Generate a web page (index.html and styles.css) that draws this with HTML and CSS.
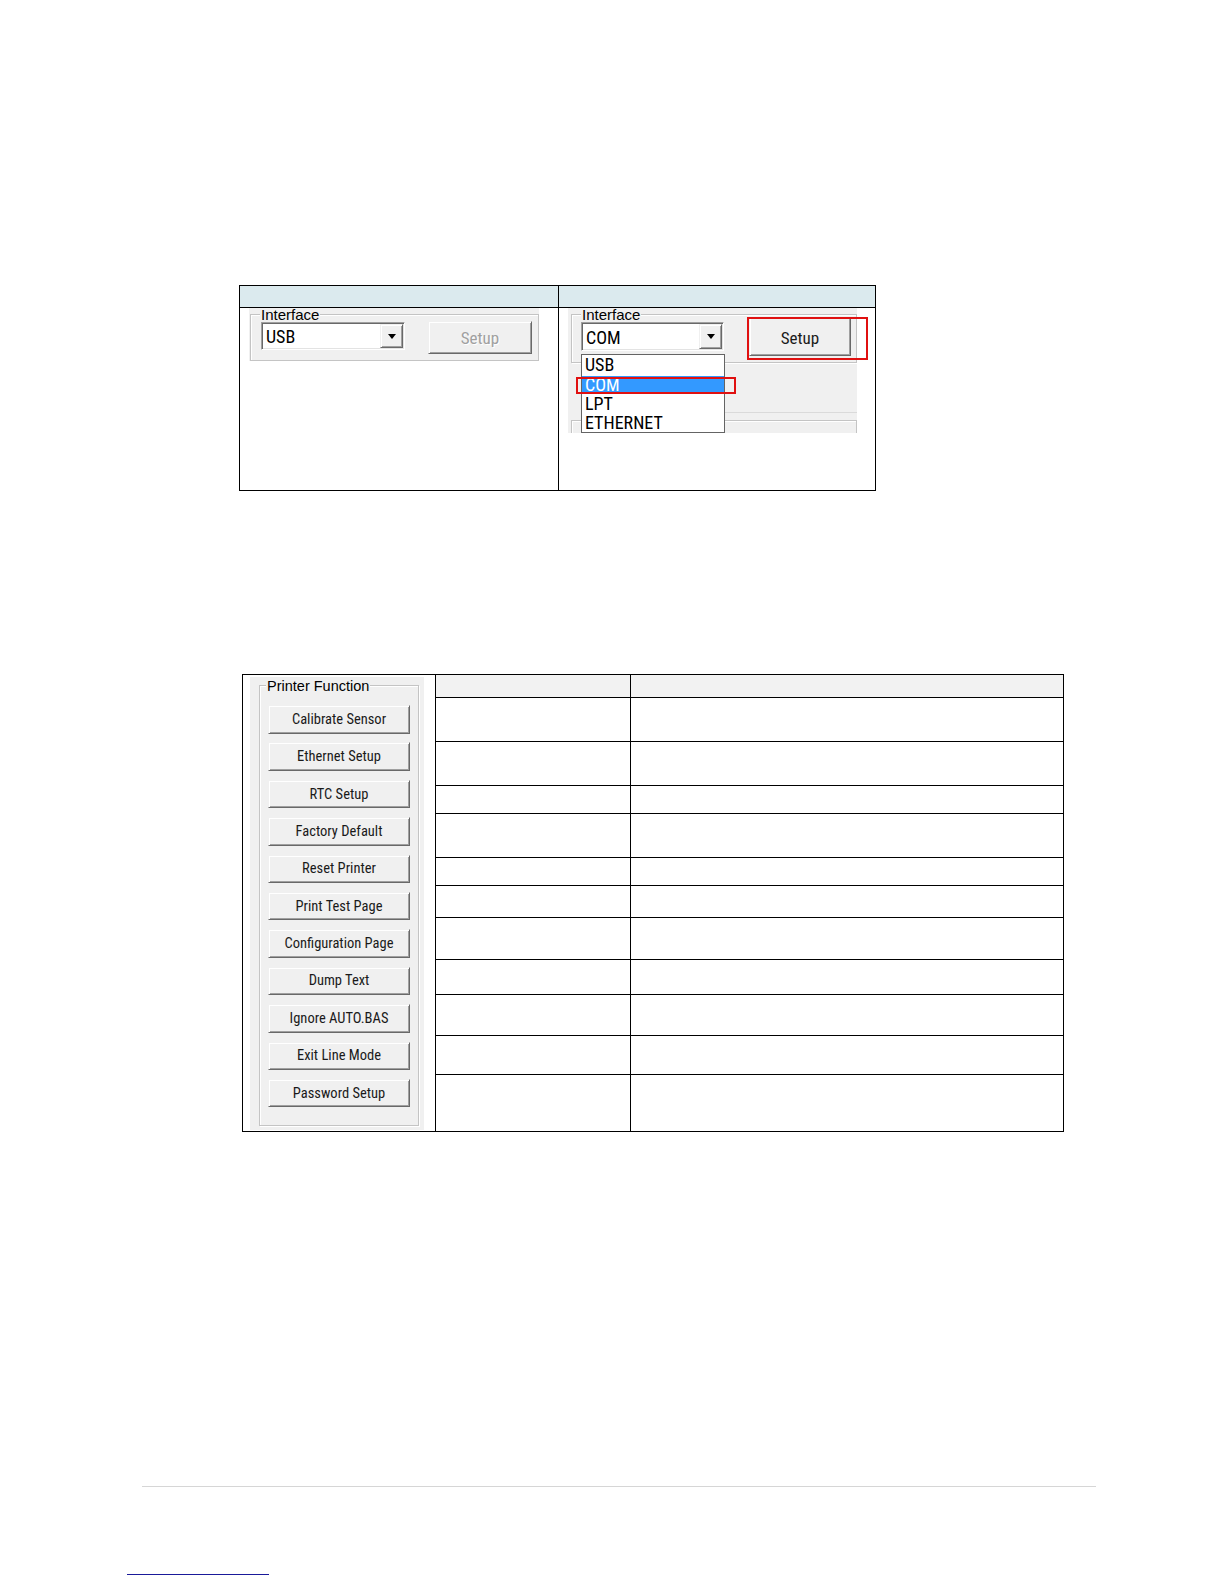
FILE: index.html
```html
<!DOCTYPE html>
<html>
<head>
<meta charset="utf-8">
<link rel="stylesheet" href="styles.css">
</head>
<body>
<div class="page">
  <div class="t1">
    <div class="cell hd"></div>
    <div class="cell hd"></div>
    <div class="cell">
      <div class="shot shot-a">
        <div class="grp grp-a">
          <span class="grp-label">Interface</span>
          <div class="grp-row">
            <div class="combo combo-a"><span class="combo-text">USB</span><span class="drop"><i class="tri"></i></span></div>
            <div class="btn btn-setup-a disabled">Setup</div>
          </div>
        </div>
      </div>
    </div>
    <div class="cell">
      <div class="shot shot-b">
        <div class="grp grp-b">
          <span class="grp-label">Interface</span>
          <div class="grp-row grp-row-b">
            <div class="combo combo-b"><span class="combo-text">COM</span><span class="drop"><i class="tri"></i></span></div>
            <div class="btn btn-setup-b">Setup</div>
          </div>
        </div>
        <div class="sep"></div>
        <div class="grp grp-b2"></div>
        <ul class="list">
          <li>USB</li>
          <li class="sel">COM</li>
          <li>LPT</li>
          <li>ETHERNET</li>
        </ul>
      </div>
      <div class="mark mark-com"></div>
      <div class="mark mark-setup"></div>
    </div>
  </div>

  <div class="t2">
    <div class="cell c-img">
      <div class="shot shot-pf">
        <div class="grp grp-pf">
          <span class="grp-label pf-label">Printer Function</span>
          <div class="pf-buttons">
            <div class="btn pf-btn">Calibrate Sensor</div>
            <div class="btn pf-btn">Ethernet Setup</div>
            <div class="btn pf-btn">RTC Setup</div>
            <div class="btn pf-btn">Factory Default</div>
            <div class="btn pf-btn">Reset Printer</div>
            <div class="btn pf-btn">Print Test Page</div>
            <div class="btn pf-btn">Configuration Page</div>
            <div class="btn pf-btn">Dump Text</div>
            <div class="btn pf-btn">Ignore AUTO.BAS</div>
            <div class="btn pf-btn">Exit Line Mode</div>
            <div class="btn pf-btn">Password Setup</div>
          </div>
        </div>
      </div>
    </div>
    <div class="cell hd2"></div><div class="cell hd2"></div>
    <div class="cell"></div><div class="cell"></div>
    <div class="cell"></div><div class="cell"></div>
    <div class="cell"></div><div class="cell"></div>
    <div class="cell"></div><div class="cell"></div>
    <div class="cell"></div><div class="cell"></div>
    <div class="cell"></div><div class="cell"></div>
    <div class="cell"></div><div class="cell"></div>
    <div class="cell"></div><div class="cell"></div>
    <div class="cell"></div><div class="cell"></div>
    <div class="cell"></div><div class="cell"></div>
    <div class="cell"></div><div class="cell"></div>
  </div>

  <div class="foot-rule"></div>
  <div class="note-rule"></div>
</div>
</body>
</html>
```

FILE: styles.css
```css
* { box-sizing: border-box; }
html, body { margin: 0; padding: 0; background: #fff; }
body {
  width: 1224px;
  height: 1584px;
  overflow: hidden;
  font-family: "Liberation Sans", Arial, sans-serif;
  color: #000;
}
.page { padding-top: 285px; display: flow-root; }

/* ---------- table 1 ---------- */
.t1 {
  margin-left: 239px;
  width: 637px;
  display: grid;
  grid-template-columns: 318px 316px;
  grid-template-rows: 21px 182px;
  gap: 1px;
  padding: 1px;
  background: #000;
}
.cell { background: #fff; position: relative; display: flow-root; }
.t1 .hd { background: #dbeaee; }

.shot { background: #f0f0f0; position: relative; display: flow-root; }
.shot-a { margin-left: 9px; width: 290px; height: 53px; }
.shot-b { margin-left: 9px; width: 289px; height: 125px; }

/* group boxes */
.grp {
  position: relative;
  border: 1px solid #c4c4c4;
  box-shadow: inset 1px 1px 0 #fff, 1px 1px 0 #fff;
}
.grp-label {
  position: absolute;
  top: -7px;
  left: 9px;
  padding: 0 1px;
  background: #f0f0f0;
  font-size: 15px;
  line-height: 14px;
  white-space: nowrap;
}
.grp-a { margin-left: 1px; margin-top: 6px; width: 289px; height: 47px; }
.grp-b { margin-left: 3px; margin-top: 6px; width: 286px; height: 49px; }
.sep { margin-left: 157px; margin-top: 49px; width: 132px; height: 1px; background: #dadada; }
.grp-b2 {
  margin-left: 3px; margin-top: 7px; width: 286px; height: 13px;
  border-bottom: none;
  box-shadow: inset 1px 1px 0 #fff;
}

.grp-row { display: flex; align-items: flex-start; padding: 7px 0 0 10px; }
.grp-row-b { padding-left: 9px; }

/* combo */
.combo {
  display: flex;
  align-items: stretch;
  background: #fff;
  border: 1px solid;
  border-color: #a0a0a0 #fff #fff #a0a0a0;
  box-shadow: inset 1px 1px 0 #696969, inset -1px -1px 0 #e3e3e3;
  padding: 1px;
  font-family: "Liberation Sans Narrow", "Roboto Condensed", "Liberation Sans", sans-serif;
  font-size: 18px;
}
.combo-a { width: 144px; height: 28px; }
.combo-b { width: 143px; height: 29px; }
.combo-text { flex: 1; display: flex; align-items: center; padding-left: 3px; padding-top: 1px; }
.drop {
  width: 23px;
  display: flex;
  align-items: center;
  justify-content: center;
  background: #f0f0f0;
  border: 1px solid;
  border-color: #f0f0f0 #696969 #696969 #f0f0f0;
  box-shadow: inset 1px 1px 0 #fff, inset -1px -1px 0 #a0a0a0;
}
.tri {
  display: block;
  width: 0; height: 0;
  border-left: 4px solid transparent;
  border-right: 4px solid transparent;
  border-top: 5px solid #000;
}

/* buttons */
.btn {
  display: flex;
  align-items: center;
  justify-content: center;
  background: #f0f0f0;
  border: 1px solid;
  border-color: #f0f0f0 #696969 #696969 #f0f0f0;
  box-shadow: inset 1px 1px 0 #fff, inset -1px -1px 0 #a0a0a0;
  font-family: "Liberation Sans Narrow", "Roboto Condensed", "Liberation Sans", sans-serif;
  color: #1a1a1a;
  white-space: nowrap;
}
.btn-setup-a { margin-left: 23px; margin-top: -1px; width: 104px; height: 33px; font-size: 17px; }
.btn-setup-b { margin-left: 25px; margin-top: -5px; width: 102px; height: 39px; font-size: 17px; padding-top: 3px; }
.disabled { color: #a0a0a0; text-shadow: 1px 1px 0 #fff; }

/* dropdown list (overlay) */
.list {
  position: absolute;
  left: 13px;
  top: 46px;
  width: 144px;
  height: 79px;
  margin: 0;
  padding: 0;
  list-style: none;
  background: #fff;
  border: 1px solid #646464;
  font-family: "Liberation Sans Narrow", "Roboto Condensed", "Liberation Sans", sans-serif;
  font-size: 18px;
}
.list li { height: 19.25px; line-height: 19px; padding-left: 3px; }
.list li.sel { background: #3399ff; color: #fff; margin-top: 2px; height: 16px; line-height: 17px; margin-bottom: 1.25px; }

/* red marks (overlay) */
.mark { position: absolute; border: 2px solid #e01010; }
.mark-com { left: 17px; top: 69px; width: 160px; height: 17px; }
.mark-setup { left: 188px; top: 9px; width: 121px; height: 43px; }

/* ---------- table 2 ---------- */
.t2 {
  margin-top: 183px;
  margin-left: 242px;
  width: 822px;
  display: grid;
  grid-template-columns: 192px 194px 432px;
  grid-template-rows: 22px 43px 43px 27px 43px 27px 31px 41px 34px 40px 38px 56px;
  gap: 1px;
  padding: 1px;
  background: #000;
}
.c-img { grid-column: 1; grid-row: 1 / -1; }
.t2 .hd2 { background: #f2f2f2; }

.shot-pf { margin-left: 7px; margin-top: 2px; width: 174px; height: 453px; }
.grp-pf { margin-left: 9px; margin-top: 8px; width: 160px; height: 441px; }
.pf-label { left: 6px; font-size: 14.5px; }
.pf-buttons { display: flex; flex-direction: column; gap: 8.9px; padding: 19px 0 0 8px; }
.pf-btn { width: 142px; height: 28.5px; font-size: 14.5px; }

/* ---------- footer ---------- */
.foot-rule { margin-top: 354px; margin-left: 142px; width: 954px; height: 1px; background: #d6d6d6; }
.note-rule { margin-top: 87px; margin-left: 127px; width: 142px; height: 1px; background: #1a1a9a; }
```
